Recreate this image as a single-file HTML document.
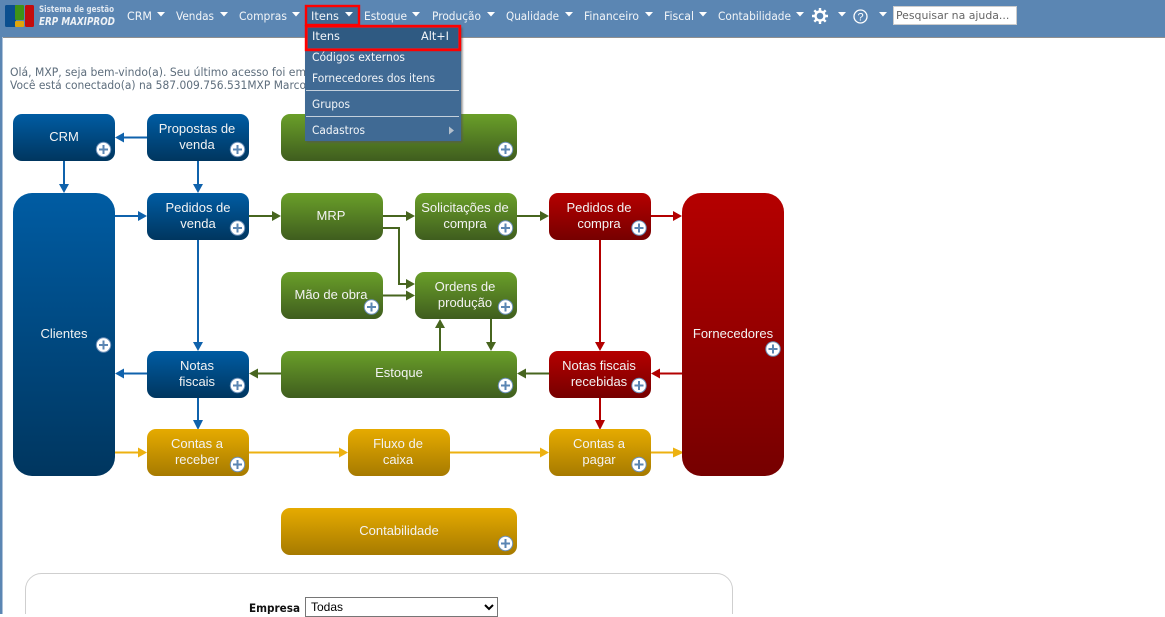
<!DOCTYPE html>
<html lang="pt-BR">
<head>
<meta charset="utf-8">
<title>ERP MAXIPROD</title>
<style>
html,body{margin:0;padding:0;width:1165px;height:614px;overflow:hidden;background:#fff}
svg{position:absolute;left:0;top:0;display:block}
select{position:absolute;left:305px;top:597px;width:193px;height:20px;font:12px "Liberation Sans",sans-serif;background:#fff;color:#000;border:1px solid #767676;border-radius:0;padding:0 0 0 1px;margin:0}
input{position:absolute;left:893px;top:6px;width:124px;height:19px;box-sizing:border-box;border:1px solid #ccc;padding:0 0 0 2px;margin:0;font:10.9px "DejaVu Sans",sans-serif;color:#666;background:#fff}
input::placeholder{color:#666;opacity:1}
.nav{font:11.6px "DejaVu Sans",sans-serif;fill:#f2f5f8}
.m{font:11.6px "DejaVu Sans",sans-serif;fill:#f2f5f8}
.w{font:13px "Liberation Sans",sans-serif;fill:#f3f3f3;text-anchor:middle}
.g{font:11.4px "DejaVu Sans",sans-serif;fill:#5d6d7c}
</style>
</head>
<body>
<svg width="1165" height="614" viewBox="0 0 1165 614" xmlns="http://www.w3.org/2000/svg">
<defs>
<linearGradient id="b" x1="0" y1="0" x2="0" y2="1"><stop offset="0" stop-color="#005ca3"/><stop offset="1" stop-color="#00365f"/></linearGradient>
<linearGradient id="gr" x1="0" y1="0" x2="0" y2="1"><stop offset="0" stop-color="#6a9f29"/><stop offset="1" stop-color="#3f5d1e"/></linearGradient>
<linearGradient id="r" x1="0" y1="0" x2="0" y2="1"><stop offset="0" stop-color="#b50000"/><stop offset="1" stop-color="#760000"/></linearGradient>
<linearGradient id="y" x1="0" y1="0" x2="0" y2="1"><stop offset="0" stop-color="#e6ab00"/><stop offset="1" stop-color="#a67a00"/></linearGradient>
<g id="p"><circle r="7.2" fill="#fff" stroke="#6b8fb8" stroke-width="1"/><path d="M-4.5 0H4.500M0-4.500V4.500" stroke="#5b86b3" stroke-width="2"/></g>
<filter id="sh" x="-10%" y="-10%" width="120%" height="120%"><feDropShadow dx="1.500" dy="1.500" stdDeviation="1" flood-color="#555" flood-opacity=".7"/></filter>
</defs>

<!-- page frame -->
<rect x="0" y="37" width="2.500" height="577" fill="#5b86b3"/>
<rect x="0" y="0" width="1165" height="37" fill="#5b86b3"/>
<rect x="3" y="37" width="1162" height="1" fill="#8f8f8f"/>

<!-- logo -->
<rect x="5" y="5" width="11" height="22" rx="1.500" fill="#0b4f8f"/>
<rect x="15" y="5" width="9" height="15" rx="1" fill="#3f9216"/>
<rect x="15" y="21" width="9" height="6" rx="1" fill="#dfa50c"/>
<rect x="25" y="5" width="9" height="22" rx="1.500" fill="#c40c0c"/>
<text x="39" y="12" font-family="DejaVu Sans" font-size="9" font-weight="bold" fill="#dfe7f0" textLength="75" lengthAdjust="spacingAndGlyphs">Sistema de gestão</text>
<text x="39" y="25" font-family="DejaVu Sans" font-size="11" font-weight="bold" font-style="italic" fill="#eef2f6" textLength="76" lengthAdjust="spacingAndGlyphs">ERP MAXIPROD</text>

<!-- welcome -->
<text class="g" x="10" y="76" textLength="296" lengthAdjust="spacingAndGlyphs">Olá, MXP, seja bem-vindo(a). Seu último acesso foi em</text>
<text class="g" x="10" y="89" textLength="296" lengthAdjust="spacingAndGlyphs">Você está conectado(a) na 587.009.756.531MXP Marco</text>

<!-- connectors -->
<g fill="none" stroke-width="2">
<g stroke="#0f62ac">
<path d="M147 137.500H122M64 161V186M198 161V186M115 216H140M198 240V344M147 373.500H122M198 398V422"/>
</g>
<g stroke="#47651f">
<path d="M249 216H274M383 216H408M517 216H542M383 228H399V284H408M383 295.500H408M549 373.500H524M281 373.500H256M491 319V344M440 351V326"/>
</g>
<g stroke="#b30000">
<path d="M651 216H675M600 240V344M682 373.500H658M600 398V422"/>
</g>
<g stroke="#edb110">
<path d="M115 452.500H140M249 452.500H341M450 452.500H542M651 452.500H675"/>
</g>
</g>
<g fill="#0f62ac">
<path d="M115 137.500L124 132.500V142.500ZM64 193L59 184H69ZM198 193L193 184H203ZM147 216L138 211V221ZM198 351L193 342H203ZM115 373.500L124 368.500V378.500ZM198 430L193 420H203Z"/>
</g>
<g fill="#47651f">
<path d="M281 216L272 211V221ZM415 216L406 211V221ZM549 216L540 211V221ZM415 284L406 279V289ZM415 295.500L406 290.500V300.500ZM517 373.500L526 368.500V378.500ZM249 373.500L258 368.500V378.500ZM491 351L486 342H496ZM440 319L435 328H445Z"/>
</g>
<g fill="#b30000">
<path d="M682 216L673 211V221ZM600 351L595 342H605ZM651 373.500L660 368.500V378.500ZM600 430L595 420H605Z"/>
</g>
<g fill="#edb110">
<path d="M147 452.500L138 447.500V457.500ZM348 452.500L339 447.500V457.500ZM549 452.500L540 447.500V457.500ZM684 452.500L673 447.500V457.500Z"/>
</g>

<!-- boxes -->
<g>
<rect x="13" y="114" width="102" height="47" rx="9" fill="url(#b)"/>
<rect x="147" y="114" width="102" height="47" rx="9" fill="url(#b)"/>
<rect x="281" y="114" width="236" height="47" rx="9" fill="url(#gr)"/>
<rect x="13" y="193" width="102" height="283" rx="19" fill="url(#b)"/>
<rect x="147" y="193" width="102" height="47" rx="9" fill="url(#b)"/>
<rect x="281" y="193" width="102" height="47" rx="9" fill="url(#gr)"/>
<rect x="415" y="193" width="102" height="47" rx="9" fill="url(#gr)"/>
<rect x="549" y="193" width="102" height="47" rx="9" fill="url(#r)"/>
<rect x="682" y="193" width="102" height="283" rx="19" fill="url(#r)"/>
<rect x="281" y="272" width="102" height="47" rx="9" fill="url(#gr)"/>
<rect x="415" y="272" width="102" height="47" rx="9" fill="url(#gr)"/>
<rect x="147" y="351" width="102" height="47" rx="9" fill="url(#b)"/>
<rect x="281" y="351" width="236" height="47" rx="9" fill="url(#gr)"/>
<rect x="549" y="351" width="102" height="47" rx="9" fill="url(#r)"/>
<rect x="147" y="429" width="102" height="47" rx="9" fill="url(#y)"/>
<rect x="348" y="429" width="102" height="47" rx="9" fill="url(#y)"/>
<rect x="549" y="429" width="102" height="47" rx="9" fill="url(#y)"/>
<rect x="281" y="508" width="236" height="47" rx="9" fill="url(#y)"/>
</g>

<!-- box labels -->
<text class="w" x="64" y="141">CRM</text>
<text class="w" x="197" y="133">Propostas de</text><text class="w" x="197" y="149">venda</text>
<text class="w" x="64" y="338">Clientes</text>
<text class="w" x="198" y="212">Pedidos de</text><text class="w" x="198" y="228">venda</text>
<text class="w" x="331" y="220">MRP</text>
<text class="w" x="465" y="212">Solicitações de</text><text class="w" x="465" y="228">compra</text>
<text class="w" x="599" y="212">Pedidos de</text><text class="w" x="599" y="228">compra</text>
<text class="w" x="733" y="338">Fornecedores</text>
<text class="w" x="331" y="299">Mão de obra</text>
<text class="w" x="465" y="291">Ordens de</text><text class="w" x="465" y="307">produção</text>
<text class="w" x="197" y="370">Notas</text><text class="w" x="197" y="386">fiscais</text>
<text class="w" x="399" y="377">Estoque</text>
<text class="w" x="599" y="370">Notas fiscais</text><text class="w" x="599" y="386">recebidas</text>
<text class="w" x="197" y="448">Contas a</text><text class="w" x="197" y="464">receber</text>
<text class="w" x="398" y="448">Fluxo de</text><text class="w" x="398" y="464">caixa</text>
<text class="w" x="599" y="448">Contas a</text><text class="w" x="599" y="464">pagar</text>
<text class="w" x="399" y="535">Contabilidade</text>

<!-- plus icons -->
<use href="#p" x="103.500" y="149.500"/><use href="#p" x="237.500" y="149.500"/><use href="#p" x="505.500" y="149.500"/>
<use href="#p" x="103.500" y="345"/><use href="#p" x="237.500" y="228"/><use href="#p" x="505.500" y="228"/>
<use href="#p" x="639" y="228"/><use href="#p" x="773" y="349"/><use href="#p" x="371.500" y="307"/>
<use href="#p" x="505.500" y="307"/><use href="#p" x="237.500" y="385.500"/><use href="#p" x="505.500" y="385.500"/>
<use href="#p" x="639" y="385.500"/><use href="#p" x="237.500" y="464.500"/><use href="#p" x="639" y="464.500"/>
<use href="#p" x="505.500" y="543.500"/>

<!-- lower panel -->
<rect x="25.500" y="573.500" width="707" height="60" rx="16" fill="#fff" stroke="#cfcfcf"/>
<text x="249" y="612" font-family="DejaVu Sans" font-size="11.500" font-weight="bold" fill="#111" textLength="51" lengthAdjust="spacingAndGlyphs">Empresa</text>

<!-- nav -->
<rect x="306" y="6" width="53" height="19" fill="#3f6a94"/>
<text class="nav" x="127" y="20" textLength="25" lengthAdjust="spacingAndGlyphs">CRM</text>
<text class="nav" x="176" y="20" textLength="38" lengthAdjust="spacingAndGlyphs">Vendas</text>
<text class="nav" x="239" y="20" textLength="48" lengthAdjust="spacingAndGlyphs">Compras</text>
<text class="nav" x="311" y="20" textLength="28" lengthAdjust="spacingAndGlyphs">Itens</text>
<text class="nav" x="364" y="20" textLength="43" lengthAdjust="spacingAndGlyphs">Estoque</text>
<text class="nav" x="432" y="20" textLength="49" lengthAdjust="spacingAndGlyphs">Produção</text>
<text class="nav" x="506" y="20" textLength="53" lengthAdjust="spacingAndGlyphs">Qualidade</text>
<text class="nav" x="584" y="20" textLength="55" lengthAdjust="spacingAndGlyphs">Financeiro</text>
<text class="nav" x="664" y="20" textLength="30" lengthAdjust="spacingAndGlyphs">Fiscal</text>
<text class="nav" x="718" y="20" textLength="73" lengthAdjust="spacingAndGlyphs">Contabilidade</text>
<g fill="#fff">
<path d="M157 12H165L161 16.500ZM220 12H228L224 16.500ZM292 12H300L296 16.500ZM345 12H353L349 16.500ZM412 12H420L416 16.500ZM487 12H495L491 16.500ZM565 12H573L569 16.500ZM645 12H653L649 16.500ZM699 12H707L703 16.500ZM796 12H804L800 16.500ZM838 12H846L842 16.500ZM879 12H887L883 16.500Z"/>
</g>
<!-- gear -->
<g transform="translate(820 16)" stroke="#fff" fill="none">
<circle r="4.500" stroke-width="2.400"/>
<path d="M0-8V-5M0 5V8M-8 0H-5M5 0H8M-5.700-5.700L-3.600-3.600M3.600 3.600L5.700 5.700M-5.700 5.700L-3.600 3.600M3.600-3.600L5.700-5.700" stroke-width="2.400"/>
</g>
<!-- help -->
<circle cx="860.500" cy="16.500" r="6.500" fill="none" stroke="#fff" stroke-width="1.300"/>
<text x="860.500" y="20.500" font-family="Liberation Sans" font-size="11" fill="#fff" text-anchor="middle">?</text>

<!-- red outline of nav item -->
<rect x="306" y="6" width="53" height="19" fill="none" stroke="#f00" stroke-width="2.400"/>

<!-- dropdown -->
<rect x="305" y="26" width="156" height="115" fill="#416b94" filter="url(#sh)"/>
<rect x="308" y="28" width="150" height="20" fill="#2f5a82"/>
<rect x="306.200" y="26.200" width="153.600" height="23.600" fill="none" stroke="#f00" stroke-width="2.800"/>
<text class="m" x="312" y="40" textLength="28" lengthAdjust="spacingAndGlyphs">Itens</text>
<text class="m" x="421" y="40" textLength="28" lengthAdjust="spacingAndGlyphs">Alt+I</text>
<text class="m" x="312" y="61" textLength="93" lengthAdjust="spacingAndGlyphs">Códigos externos</text>
<text class="m" x="312" y="82" textLength="123" lengthAdjust="spacingAndGlyphs">Fornecedores dos itens</text>
<rect x="306" y="90" width="153" height="1" fill="#c4d0dc"/>
<text class="m" x="312" y="108" textLength="38" lengthAdjust="spacingAndGlyphs">Grupos</text>
<rect x="306" y="116" width="153" height="1" fill="#c4d0dc"/>
<text class="m" x="312" y="134" textLength="53" lengthAdjust="spacingAndGlyphs">Cadastros</text>
<path d="M449 126.500L454 130.500L449 134.500Z" fill="#b4c0cc"/>
</svg>
<input type="text" placeholder="Pesquisar na ajuda...">
<select><option>Todas</option></select>
</body>
</html>
